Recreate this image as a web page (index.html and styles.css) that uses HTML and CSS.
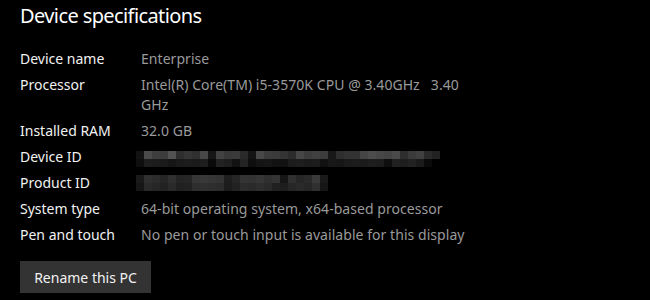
FILE: index.html
```html
<!DOCTYPE html>
<html lang="en">
<head>
<meta charset="utf-8">
<title>Device specifications</title>
<link rel="stylesheet" href="styles.css">
</head>
<body>
<main class="page">
  <h1 class="title">Device specifications</h1>
  <dl class="specs">
    <dt>Device name</dt>
    <dd>Enterprise</dd>
    <dt>Processor</dt>
    <dd>Intel(R) Core(TM) i5-3570K CPU @ 3.40GHz&nbsp;&nbsp; 3.40<br>GHz</dd>
    <dt>Installed RAM</dt>
    <dd>32.0 GB</dd>
    <dt>Device ID</dt>
    <dd><svg class="redact redact-device" width="304" height="16" viewBox="0 0 304 16" shape-rendering="crispEdges" aria-label="hidden">
      <g>
        <rect x="0" y="0" width="8" height="8" fill="#121212"/>
        <rect x="8" y="0" width="8" height="8" fill="#4a4a4a"/>
        <rect x="16" y="0" width="8" height="8" fill="#3e3e3e"/>
        <rect x="24" y="0" width="8" height="8" fill="#3c3c3c"/>
        <rect x="32" y="0" width="8" height="8" fill="#525252"/>
        <rect x="40" y="0" width="8" height="8" fill="#2e2e2e"/>
        <rect x="48" y="0" width="8" height="8" fill="#353535"/>
        <rect x="56" y="0" width="8" height="8" fill="#303030"/>
        <rect x="64" y="0" width="8" height="8" fill="#484848"/>
        <rect x="72" y="0" width="8" height="8" fill="#161616"/>
        <rect x="80" y="0" width="8" height="8" fill="#424242"/>
        <rect x="88" y="0" width="8" height="8" fill="#383838"/>
        <rect x="96" y="0" width="8" height="8" fill="#3a3a3a"/>
        <rect x="104" y="0" width="8" height="8" fill="#2a2a2a"/>
        <rect x="112" y="0" width="8" height="8" fill="#141414"/>
        <rect x="120" y="0" width="8" height="8" fill="#484848"/>
        <rect x="128" y="0" width="8" height="8" fill="#3c3c3c"/>
        <rect x="136" y="0" width="8" height="8" fill="#3a3a3a"/>
        <rect x="144" y="0" width="8" height="8" fill="#343434"/>
        <rect x="152" y="0" width="8" height="8" fill="#2c2c2c"/>
        <rect x="160" y="0" width="8" height="8" fill="#464646"/>
        <rect x="168" y="0" width="8" height="8" fill="#3c3c3c"/>
        <rect x="176" y="0" width="8" height="8" fill="#404040"/>
        <rect x="184" y="0" width="8" height="8" fill="#3c3c3c"/>
        <rect x="192" y="0" width="8" height="8" fill="#181818"/>
        <rect x="200" y="0" width="8" height="8" fill="#2e2e2e"/>
        <rect x="208" y="0" width="8" height="8" fill="#333333"/>
        <rect x="216" y="0" width="8" height="8" fill="#333333"/>
        <rect x="224" y="0" width="8" height="8" fill="#454545"/>
        <rect x="232" y="0" width="8" height="8" fill="#4c4c4c"/>
        <rect x="240" y="0" width="8" height="8" fill="#474747"/>
        <rect x="248" y="0" width="8" height="8" fill="#444444"/>
        <rect x="256" y="0" width="8" height="8" fill="#4a4a4a"/>
        <rect x="264" y="0" width="8" height="8" fill="#2e2e2e"/>
        <rect x="272" y="0" width="8" height="8" fill="#3a3a3a"/>
        <rect x="280" y="0" width="8" height="8" fill="#404040"/>
        <rect x="288" y="0" width="8" height="8" fill="#2a2a2a"/>
        <rect x="296" y="0" width="8" height="8" fill="#222222"/>
      </g>
      <g>
        <rect x="0" y="8" width="8" height="8" fill="#0e0e0e"/>
        <rect x="8" y="8" width="8" height="8" fill="#1e1e1e"/>
        <rect x="16" y="8" width="8" height="8" fill="#1c1c1c"/>
        <rect x="24" y="8" width="8" height="8" fill="#1a1a1a"/>
        <rect x="32" y="8" width="8" height="8" fill="#161616"/>
        <rect x="40" y="8" width="8" height="8" fill="#1a1a1a"/>
        <rect x="48" y="8" width="8" height="8" fill="#1c1c1c"/>
        <rect x="56" y="8" width="8" height="8" fill="#1a1a1a"/>
        <rect x="64" y="8" width="8" height="8" fill="#1e1e1e"/>
        <rect x="72" y="8" width="8" height="8" fill="#0a0a0a"/>
        <rect x="80" y="8" width="8" height="8" fill="#222222"/>
        <rect x="88" y="8" width="8" height="8" fill="#1e1e1e"/>
        <rect x="96" y="8" width="8" height="8" fill="#121212"/>
        <rect x="104" y="8" width="8" height="8" fill="#242424"/>
        <rect x="112" y="8" width="8" height="8" fill="#0e0e0e"/>
        <rect x="120" y="8" width="8" height="8" fill="#141414"/>
        <rect x="128" y="8" width="8" height="8" fill="#161616"/>
        <rect x="136" y="8" width="8" height="8" fill="#121212"/>
        <rect x="144" y="8" width="8" height="8" fill="#121212"/>
        <rect x="152" y="8" width="8" height="8" fill="#1c1c1c"/>
        <rect x="160" y="8" width="8" height="8" fill="#1e1e1e"/>
        <rect x="168" y="8" width="8" height="8" fill="#1a1a1a"/>
        <rect x="176" y="8" width="8" height="8" fill="#1c1c1c"/>
        <rect x="184" y="8" width="8" height="8" fill="#111111"/>
        <rect x="192" y="8" width="8" height="8" fill="#181818"/>
        <rect x="200" y="8" width="8" height="8" fill="#161616"/>
        <rect x="208" y="8" width="8" height="8" fill="#1a1a1a"/>
        <rect x="216" y="8" width="8" height="8" fill="#1c1c1c"/>
        <rect x="224" y="8" width="8" height="8" fill="#1a1a1a"/>
        <rect x="232" y="8" width="8" height="8" fill="#1e1e1e"/>
        <rect x="240" y="8" width="8" height="8" fill="#1c1c1c"/>
        <rect x="248" y="8" width="8" height="8" fill="#0e0e0e"/>
        <rect x="256" y="8" width="8" height="8" fill="#202020"/>
        <rect x="264" y="8" width="8" height="8" fill="#1e1e1e"/>
        <rect x="272" y="8" width="8" height="8" fill="#222222"/>
        <rect x="280" y="8" width="8" height="8" fill="#1a1a1a"/>
        <rect x="288" y="8" width="8" height="8" fill="#0a0a0a"/>
      </g>
    </svg></dd>
    <dt>Product ID</dt>
    <dd><svg class="redact redact-product" width="192" height="16" viewBox="0 0 192 16" shape-rendering="crispEdges" aria-label="hidden">
      <g>
        <rect x="0" y="0" width="8" height="8" fill="#1a1a1a"/>
        <rect x="8" y="0" width="8" height="8" fill="#303030"/>
        <rect x="16" y="0" width="8" height="8" fill="#2c2c2c"/>
        <rect x="24" y="0" width="8" height="8" fill="#262626"/>
        <rect x="32" y="0" width="8" height="8" fill="#303030"/>
        <rect x="40" y="0" width="8" height="8" fill="#242424"/>
        <rect x="48" y="0" width="8" height="8" fill="#262626"/>
        <rect x="56" y="0" width="8" height="8" fill="#363636"/>
        <rect x="64" y="0" width="8" height="8" fill="#383838"/>
        <rect x="72" y="0" width="8" height="8" fill="#363636"/>
        <rect x="80" y="0" width="8" height="8" fill="#343434"/>
        <rect x="88" y="0" width="8" height="8" fill="#1e1e1e"/>
        <rect x="96" y="0" width="8" height="8" fill="#262626"/>
        <rect x="104" y="0" width="8" height="8" fill="#343434"/>
        <rect x="112" y="0" width="8" height="8" fill="#323232"/>
        <rect x="120" y="0" width="8" height="8" fill="#363636"/>
        <rect x="128" y="0" width="8" height="8" fill="#303030"/>
        <rect x="136" y="0" width="8" height="8" fill="#343434"/>
        <rect x="144" y="0" width="8" height="8" fill="#161616"/>
        <rect x="152" y="0" width="8" height="8" fill="#303030"/>
        <rect x="160" y="0" width="8" height="8" fill="#262626"/>
        <rect x="168" y="0" width="8" height="8" fill="#2a2a2a"/>
        <rect x="176" y="0" width="8" height="8" fill="#3a3a3a"/>
        <rect x="184" y="0" width="8" height="8" fill="#1a1a1a"/>
      </g>
      <g>
        <rect x="0" y="8" width="8" height="8" fill="#161616"/>
        <rect x="8" y="8" width="8" height="8" fill="#2a2a2a"/>
        <rect x="16" y="8" width="8" height="8" fill="#262626"/>
        <rect x="24" y="8" width="8" height="8" fill="#222222"/>
        <rect x="32" y="8" width="8" height="8" fill="#2a2a2a"/>
        <rect x="40" y="8" width="8" height="8" fill="#202020"/>
        <rect x="48" y="8" width="8" height="8" fill="#222222"/>
        <rect x="56" y="8" width="8" height="8" fill="#2e2e2e"/>
        <rect x="64" y="8" width="8" height="8" fill="#303030"/>
        <rect x="72" y="8" width="8" height="8" fill="#2e2e2e"/>
        <rect x="80" y="8" width="8" height="8" fill="#2c2c2c"/>
        <rect x="88" y="8" width="8" height="8" fill="#1c1c1c"/>
        <rect x="96" y="8" width="8" height="8" fill="#222222"/>
        <rect x="104" y="8" width="8" height="8" fill="#2c2c2c"/>
        <rect x="112" y="8" width="8" height="8" fill="#2a2a2a"/>
        <rect x="120" y="8" width="8" height="8" fill="#2e2e2e"/>
        <rect x="128" y="8" width="8" height="8" fill="#2a2a2a"/>
        <rect x="136" y="8" width="8" height="8" fill="#202020"/>
        <rect x="144" y="8" width="8" height="8" fill="#1e1e1e"/>
        <rect x="152" y="8" width="8" height="8" fill="#262626"/>
        <rect x="160" y="8" width="8" height="8" fill="#2a2a2a"/>
        <rect x="168" y="8" width="8" height="8" fill="#262626"/>
        <rect x="176" y="8" width="8" height="8" fill="#303030"/>
        <rect x="184" y="8" width="8" height="8" fill="#161616"/>
      </g>
    </svg></dd>
    <dt>System type</dt>
    <dd>64-bit operating system, x64-based processor</dd>
    <dt>Pen and touch</dt>
    <dd>No pen or touch input is available for this display</dd>
  </dl>
  <button class="rename-btn" type="button">Rename this PC</button>
</main>
</body>
</html>
```

FILE: styles.css
```css
html, body {
  margin: 0;
  padding: 0;
  background: #000;
}

body {
  font-family: "Noto Sans", "Open Sans", sans-serif;
  color: #fff;
  width: 650px;
  height: 300px;
  overflow: hidden;
}

.page {
  padding: 2px 0 0 20px;
}

.title {
  margin: 0;
  font-size: 20px;
  font-weight: 400;
  line-height: 28px;
  letter-spacing: -0.6px;
  color: #fff;
}

.specs {
  margin: 19px 0 0 0;
  display: grid;
  grid-template-columns: 121px auto;
  row-gap: 6px;
  font-size: 14px;
  line-height: 20px;
}

.specs dt {
  color: #f2f2f2;
}

.specs dd {
  margin: 0;
  color: #9a9a9a;
  letter-spacing: 0.05px;
}

.redact {
  display: block;
}

.redact-device {
  margin: 4px 0 0 -5px;
}

.redact-product {
  margin: 2px 0 0 -5px;
}

.rename-btn {
  margin-top: 16px;
  width: 131px;
  height: 32px;
  border: 0;
  padding: 0;
  background: #333;
  color: #f2f2f2;
  font-family: inherit;
  font-size: 14px;
}
```
